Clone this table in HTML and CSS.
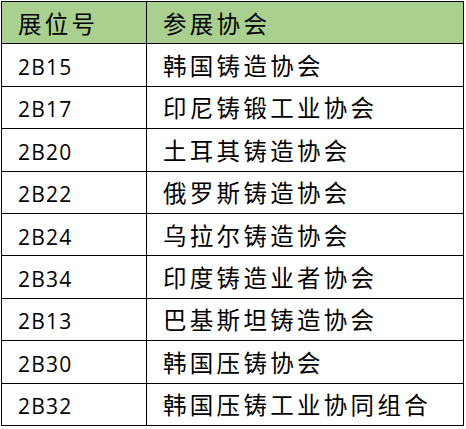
FILE: index.html
```html
<!DOCTYPE html>
<html lang="zh-CN">
<head>
<meta charset="utf-8">
<link rel="stylesheet" href="styles.css">
</head>
<body>
<table class="booths">
  <colgroup><col class="col-id"><col class="col-name"></colgroup>
  <thead>
    <tr><th class="cjk">展位号</th><th class="cjk">参展协会</th></tr>
  </thead>
  <tbody>
    <tr><td class="id">2B15</td><td class="cjk">韩国铸造协会</td></tr>
    <tr><td class="id">2B17</td><td class="cjk">印尼铸锻工业协会</td></tr>
    <tr><td class="id">2B20</td><td class="cjk">土耳其铸造协会</td></tr>
    <tr><td class="id">2B22</td><td class="cjk">俄罗斯铸造协会</td></tr>
    <tr><td class="id">2B24</td><td class="cjk">乌拉尔铸造协会</td></tr>
    <tr><td class="id">2B34</td><td class="cjk">印度铸造业者协会</td></tr>
    <tr><td class="id">2B13</td><td class="cjk">巴基斯坦铸造协会</td></tr>
    <tr><td class="id">2B30</td><td class="cjk">韩国压铸协会</td></tr>
    <tr><td class="id">2B32</td><td class="cjk">韩国压铸工业协同组合</td></tr>
  </tbody>
</table>
</body>
</html>
```
FILE: styles.css
```css
html, body {
  margin: 0;
  padding: 0;
  background: #ffffff;
}
body {
  padding: 1px 0 0 1px;
}
.booths {
  border-collapse: collapse;
  table-layout: fixed;
  width: 463px;
  color: #000;
}
.col-id { width: 145px; }
.booths tr {
  height: 42.4px;
}
.booths th,
.booths td {
  border: 1px solid #000;
  height: auto;
  padding: 0 0 0 16px;
  line-height: 24px;
  text-align: left;
  vertical-align: middle;
  white-space: nowrap;
  overflow: hidden;
}
.booths thead th {
  background: #a9d08e;
  font-weight: normal;
}
.cjk {
  font-family: "Noto Sans CJK SC", sans-serif;
  font-size: 23.5px;
  letter-spacing: 3.3px;
  font-weight: 400;
}
.booths td.id {
  font-family: "Open Sans", sans-serif;
  font-size: 21px;
  letter-spacing: 1.2px;
  padding-top: 4px;
}
```
